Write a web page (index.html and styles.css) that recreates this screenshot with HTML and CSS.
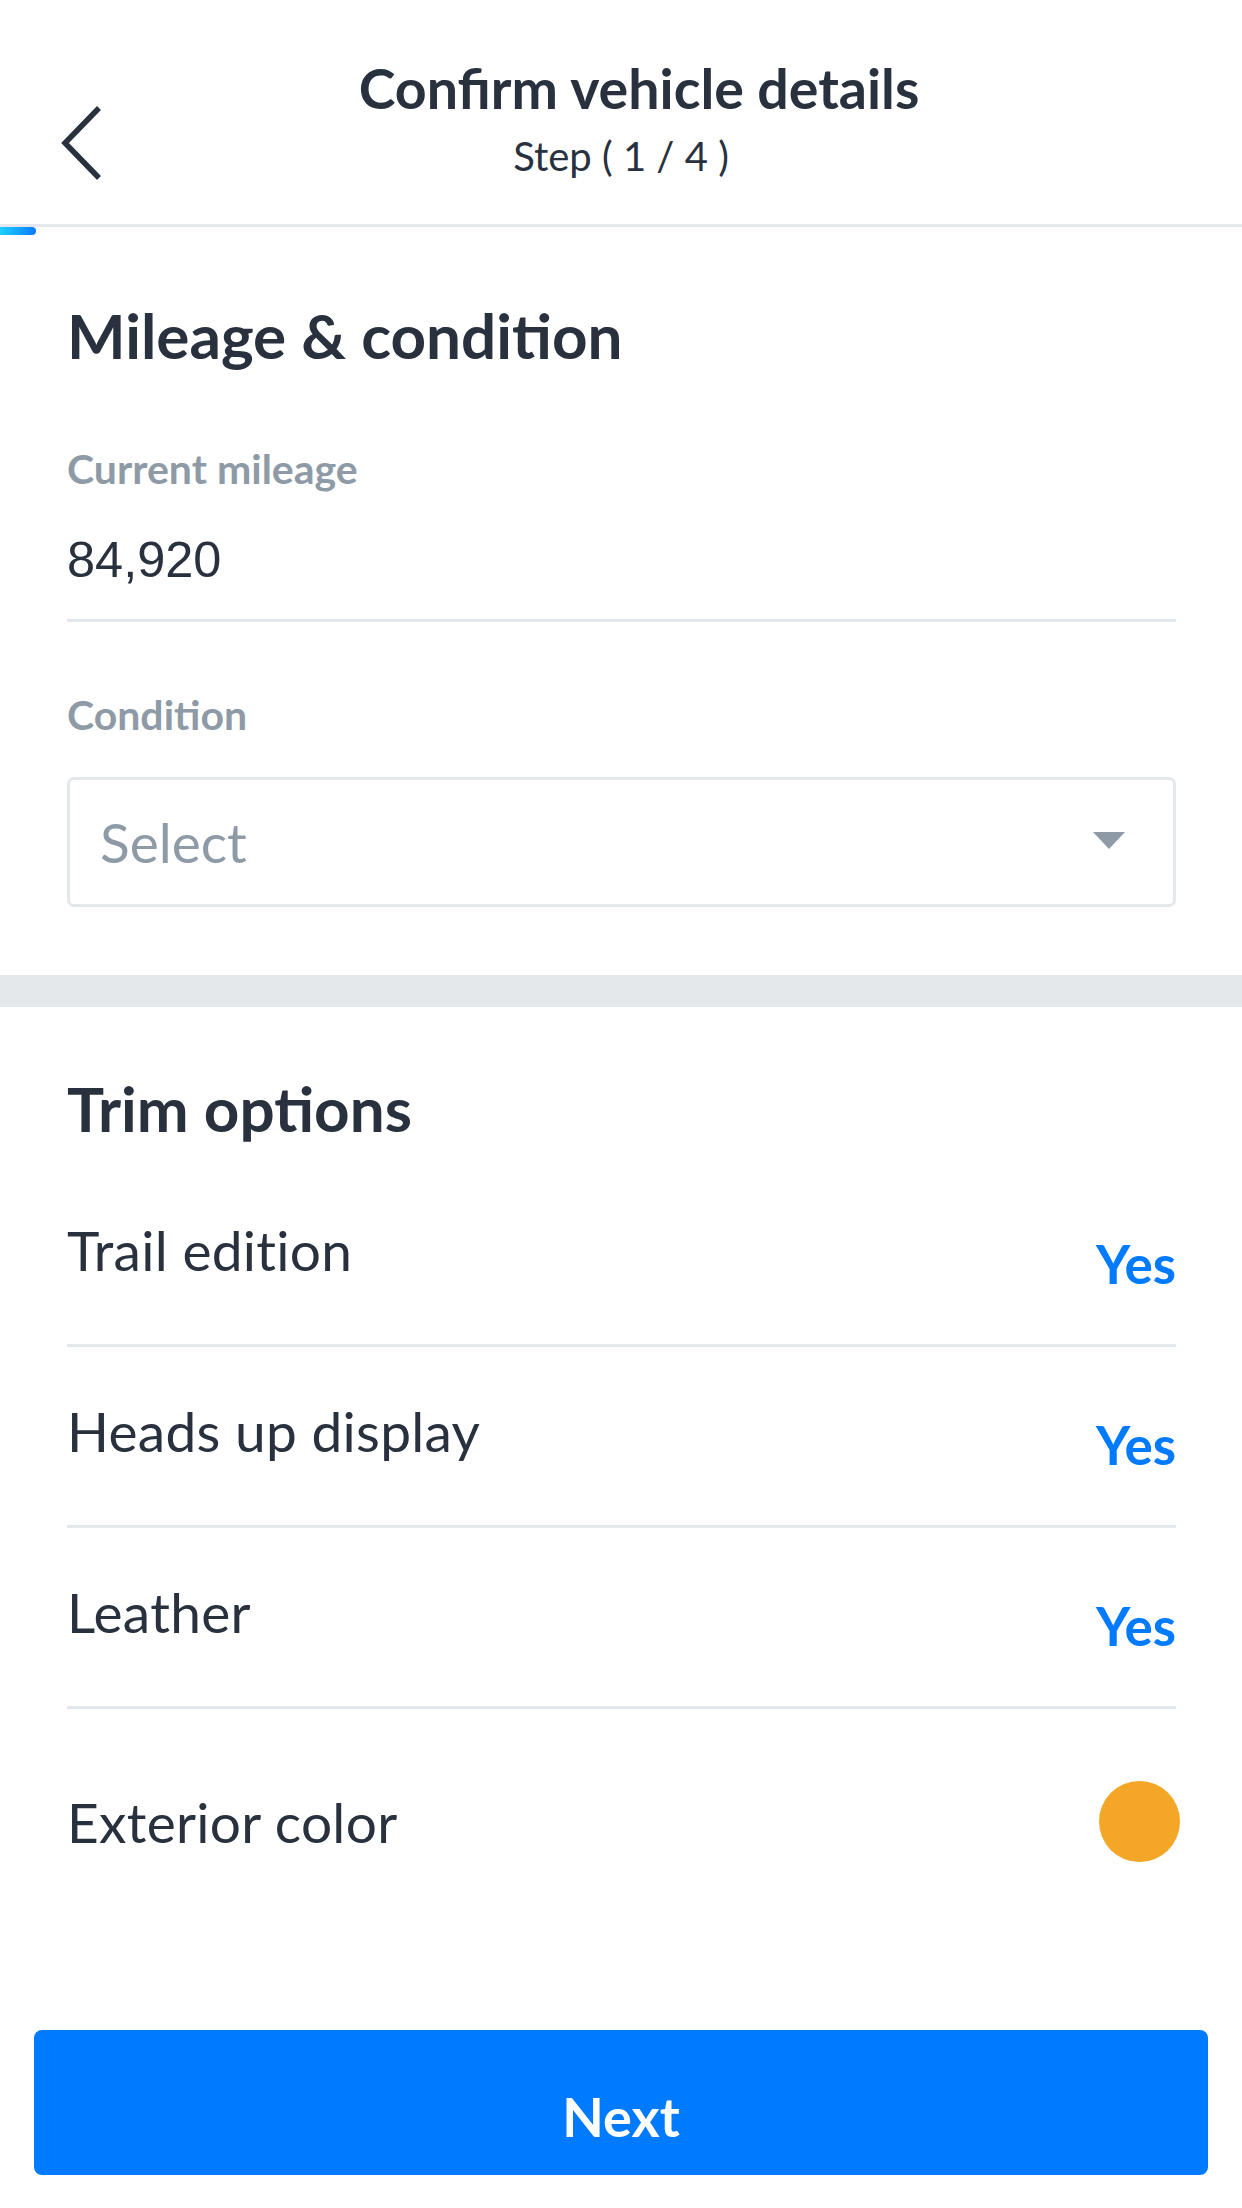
FILE: index.html
```html
<!DOCTYPE html>
<html lang="en">
<head>
<meta charset="utf-8">
<title>Confirm vehicle details</title>
<link rel="stylesheet" href="styles.css">
</head>
<body>
<div class="page">
  <header class="topbar">
    <button class="back" aria-label="Back">
      <svg width="46" height="76" viewBox="0 0 46 76"><polyline points="42,3 8,38 42,73" fill="none" stroke="#28313d" stroke-width="5.5"/></svg>
    </button>
    <div class="titles">
      <div class="title">Confirm vehicle details</div>
      <div class="step">Step ( 1 / 4 )</div>
    </div>
    <div class="spacer"></div>
  </header>
  <div class="progress"><div class="progress-fill"></div></div>

  <section class="card mileage">
    <h2 class="heading">Mileage &amp; condition</h2>
    <div class="field">
      <div class="label">Current mileage</div>
      <div class="value">84,920</div>
    </div>
    <div class="label label-condition">Condition</div>
    <div class="select">
      <span class="select-text">Select</span>
      <span class="caret"></span>
    </div>
  </section>

  <div class="band"></div>

  <section class="card trim">
    <h2 class="heading">Trim options</h2>
    <div class="row">
      <span class="row-label">Trail edition</span>
      <span class="yes">Yes</span>
    </div>
    <div class="row">
      <span class="row-label">Heads up display</span>
      <span class="yes">Yes</span>
    </div>
    <div class="row">
      <span class="row-label">Leather</span>
      <span class="yes">Yes</span>
    </div>
    <div class="row row-color">
      <span class="row-label">Exterior color</span>
      <span class="swatch"></span>
    </div>
  </section>

  <footer class="footer">
    <button class="next">Next</button>
  </footer>
</div>
</body>
</html>
```

FILE: styles.css
```css
* { box-sizing: border-box; }
html, body { margin: 0; padding: 0; background: #ffffff; }
body { font-family: "Lato", "Open Sans", sans-serif; color: #28313d; }

.page {
  width: 1242px;
  min-height: 2208px;
  display: flex;
  flex-direction: column;
}

/* Header */
.topbar {
  height: 227px;
  border-bottom: 3px solid #e4e7eb;
  display: grid;
  grid-template-columns: 1fr auto 1fr;
  align-items: start;
  padding-top: 56px;
}
.back {
  justify-self: start;
  margin: 49px 0 0 57px;
  padding: 0;
  border: 0;
  background: none;
  display: block;
  line-height: 0;
}
.titles { text-align: center; }
.title {
  font-size: 55.5px;
  line-height: 64px;
  font-weight: 700;
  padding-left: 36px;
  color: #28313d;
}
.step {
  margin-top: 12px;
  font-size: 40px;
  line-height: 48px;
  font-weight: 400;
  color: #28313d;
}

.progress { height: 8px; }
.progress-fill {
  width: 36px;
  height: 8px;
  border-radius: 0 4px 4px 0;
  background: linear-gradient(90deg, #1ccfff, #0a7bff);
}

/* Sections */
.card { padding: 0 66px 0 67px; }
.heading {
  margin: 0;
  font-size: 62px;
  line-height: 76px;
  font-weight: 700;
  color: #28313d;
}
.mileage { padding-top: 62px; padding-bottom: 68px; }

.field {
  margin-top: 73px;
  border-bottom: 3px solid #e4e7eb;
  padding-bottom: 29px;
}
.label {
  font-size: 41px;
  line-height: 46px;
  font-weight: 700;
  color: #8e9ba7;
}
.value {
  margin-top: 38px;
  font-family: "Liberation Sans", Arial, sans-serif;
  font-size: 50.5px;
  line-height: 60px;
  color: #28313d;
}
.label-condition { margin-top: 70px; }

.select {
  margin-top: 39px;
  height: 130px;
  border: 3px solid #e4e7eb;
  border-radius: 7px;
  display: flex;
  align-items: center;
  justify-content: space-between;
  padding: 0 48px 0 30px;
}
.select-text {
  font-size: 55px;
  color: #8e9ba7;
  line-height: 64px;
}
.caret {
  width: 0;
  height: 0;
  border-left: 16.5px solid transparent;
  border-right: 16.5px solid transparent;
  border-top: 17px solid #8e9ba7;
  margin-top: -4px;
}

.band { height: 32px; background: #e4e8eb; }

.trim { padding-top: 63px; }
.trim .heading { margin-bottom: 20px; }

.row {
  display: flex;
  justify-content: space-between;
  align-items: flex-start;
  padding: 53px 0 63px;
  border-bottom: 3px solid #e4e7eb;
}
.row-label {
  font-size: 55px;
  line-height: 62px;
  font-weight: 400;
  letter-spacing: 0.3px;
  color: #28313d;
}
.yes {
  font-size: 53px;
  line-height: 62px;
  font-weight: 700;
  color: #007aff;
  margin-top: 14px;
  margin-bottom: -14px;
}
.row-color {
  border-bottom: 0;
  align-items: center;
  padding: 72px 0 0;
}
.swatch {
  width: 81px;
  height: 81px;
  border-radius: 50%;
  background: #f4a627;
  margin-right: -4px;
}

/* Footer */
.footer {
  margin-top: auto;
  padding: 0 34px 33px;
}
.next {
  width: 100%;
  height: 145px;
  border: 0;
  border-radius: 8px;
  background: #007aff;
  color: #ffffff;
  font-family: "Lato", "Open Sans", sans-serif;
  font-size: 54px;
  font-weight: 700;
  padding-top: 28px;
}
```
